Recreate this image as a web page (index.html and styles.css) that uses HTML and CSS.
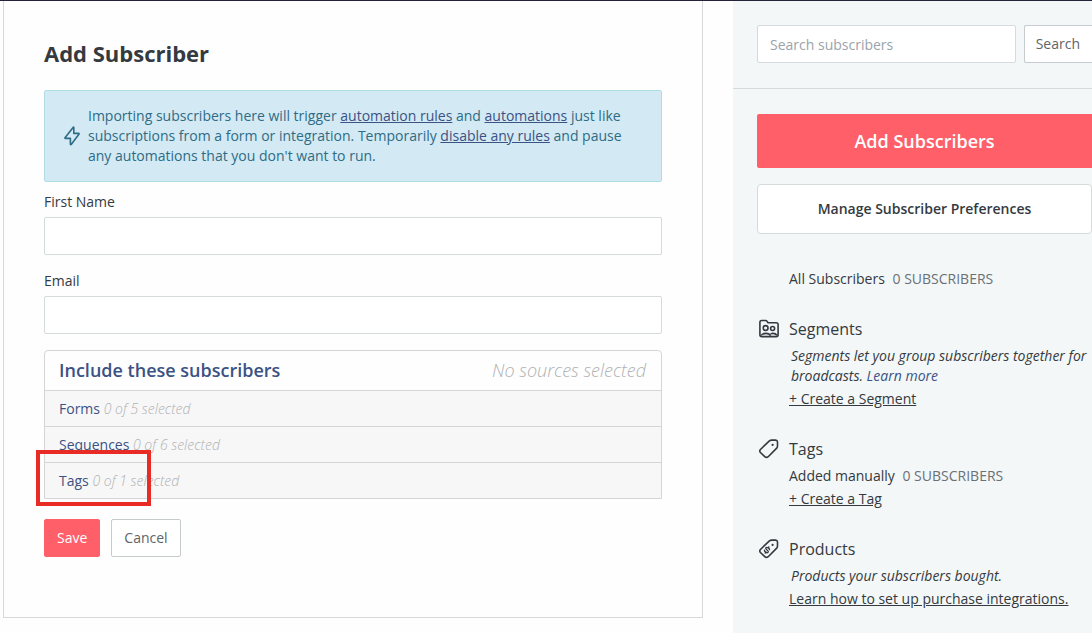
FILE: index.html
```
<!DOCTYPE html>
<html lang="en">
<head>
    <meta charset="UTF-8">
    <meta name="viewport" content="width=device-width, initial-scale=1.0">
    <title>Add Subscriber</title>
    <link rel="stylesheet" href="styles.css">
</head>
<body>

<div class="page">
    <main class="main">
        <form class="card">
            <h1>Add Subscriber</h1>

            <div class="notice">
                <svg class="notice-icon" width="16" height="20" viewBox="0 0 16 20" fill="none" stroke="currentColor" stroke-width="1.6" stroke-linejoin="round">
                    <path d="M9.3 1.2 Q9.8 .8 9.8 1.6 V7.4 H14.6 Q15.4 7.5 14.9 8.3 L7.2 18.4 Q6.5 19 6.4 18.2 V12.4 H1.5 Q.6 12.3 1.2 11.5 Z"/>
                </svg>
                <p>Importing subscribers here will trigger <a href="#">automation rules</a> and <a href="#">automations</a> just like subscriptions from a form or integration. Temporarily <a href="#">disable any rules</a> and pause any automations that you don't want to run.</p>
            </div>

            <div class="field">
                <label for="firstName">First Name</label>
                <input type="text" id="firstName" name="firstName">
            </div>
            <div class="field">
                <label for="email">Email</label>
                <input type="email" id="email" name="email">
            </div>

            <div class="sources">
                <div class="sources-header">
                    <h2>Include these subscribers</h2>
                    <span class="muted">No sources selected</span>
                </div>
                <div class="source-row"><a href="#">Forms</a> <span class="muted">0 of 5 selected</span></div>
                <div class="source-row"><a href="#">Sequences</a> <span class="muted">0 of 6 selected</span></div>
                <div class="source-row highlighted"><a href="#">Tags</a> <span class="muted">0 of 1 selected</span></div>
            </div>

            <div class="actions">
                <button type="submit" class="btn btn-save">Save</button>
                <button type="button" class="btn">Cancel</button>
            </div>
        </form>
    </main>

    <aside class="sidebar">
        <form class="search">
            <input type="text" placeholder="Search subscribers" aria-label="Search subscribers">
            <button type="submit" class="btn btn-search">Search</button>
        </form>

        <div class="sidebar-body">
            <button type="button" class="btn-add">Add Subscribers</button>
            <button type="button" class="btn-manage">Manage Subscriber Preferences</button>

            <p class="all">All Subscribers <span class="count">0 SUBSCRIBERS</span></p>

            <section class="group">
                <h3>
                    <svg width="20" height="20" viewBox="0 0 20 20" fill="none" stroke="currentColor" stroke-width="1.6" stroke-linejoin="round">
                        <path d="M.9 3.2 Q.9 1.5 2.6 1.5 H6.6 Q7.5 1.5 8.1 2.4 L9 3.8 H17.2 Q19.1 3.8 19.1 5.6 V15.8 Q19.1 17.6 17.2 17.6 H2.8 Q.9 17.6 .9 15.8 Z"/>
                        <circle cx="6.6" cy="9" r="2.4"/>
                        <circle cx="13.6" cy="9.5" r="2"/>
                        <path d="M2.2 16.6 Q3 14.4 6.8 14.4 T11.6 16.8 M11.6 14.8 Q15.8 13.4 18 16.3"/>
                    </svg>
                    Segments
                </h3>
                <p class="description">Segments let you group subscribers together for broadcasts. <a href="#">Learn more</a></p>
                <a href="#" class="group-link">+ Create a Segment</a>
            </section>

            <section class="group">
                <h3>
                    <svg width="20" height="20" viewBox="0 0 20 20" fill="none" stroke="currentColor" stroke-width="1.6" stroke-linejoin="round">
                        <path d="M10.4 1.9 Q11.4 1.1 12.6 1.1 H16.6 Q18.4 1.2 18.5 3 V7 Q18.5 8.2 17.7 9.1 L9.2 17.7 Q7.4 19.1 5.8 17.7 L1.4 13.5 Q.1 12 1.4 10.5 Z"/>
                        <circle cx="13.6" cy="5.9" r="1.1" fill="currentColor" stroke="none"/>
                    </svg>
                    Tags
                </h3>
                <p>Added manually <span class="count">0 SUBSCRIBERS</span></p>
                <a href="#" class="group-link">+ Create a Tag</a>
            </section>

            <section class="group">
                <h3>
                    <svg width="20" height="20" viewBox="0 0 20 20" fill="none" stroke="currentColor" stroke-width="1.6" stroke-linejoin="round">
                        <path d="M10.4 1.9 Q11.4 1.1 12.6 1.1 H16.6 Q18.4 1.2 18.5 3 V7 Q18.5 8.2 17.7 9.1 L9.2 17.7 Q7.4 19.1 5.8 17.7 L1.4 13.5 Q.1 12 1.4 10.5 Z"/>
                        <circle cx="13.6" cy="5.9" r="1.1" fill="currentColor" stroke="none"/>
                        <path transform="translate(8 11) rotate(30)" stroke-width="1.4" stroke-linecap="round" d="M2 -1.6 Q1.4 -2.5 0 -2.5 Q-2 -2.4 -2 -1.2 Q-2 -.1 0 0 Q2.1 .1 2.1 1.3 Q2 2.5 0 2.5 Q-1.6 2.5 -2.1 1.5 M0 -3.6 V-2.5 M0 2.5 V3.6"/>
                    </svg>
                    Products
                </h3>
                <p class="description">Products your subscribers bought.</p>
                <a href="#" class="group-link">Learn how to set up purchase integrations.</a>
            </section>
        </div>
    </aside>
</div>

</body>
</html>
```
FILE: styles.css
```
*, *::after {
    box-sizing: border-box;
}

body {
    margin: 0;
    font-family: "Open Sans", sans-serif;
    font-size: 14px;
    line-height: 20px;
    color: #343a40;
    background-color: #fefefe;
}

h1, h2, h3, p {
    margin: 0;
}

a {
    color: #3b5284;
}

input, button {
    font-family: inherit;
    font-size: 14px;
    line-height: 20px;
}

button {
    cursor: pointer;
}

input {
    width: 100%;
    height: 38px;
    padding: 8px 12px;
    border: 1px solid #d5dadd;
    border-radius: 2px;
    background-color: white;
    color: #343a40;
}

input::placeholder {
    color: #9aa3ab;
}

.page {
    display: flex;
    min-height: 100vh;
    border-top: 1px solid #26223a;
}

/* Main column */
.main {
    flex: 1;
    min-width: 0;
    padding: 0 30px 15px 3px;
}

.card {
    padding: 36px 40px 60px;
    border: 1px solid #d5d9dc;
    border-top: none;
}

h1 {
    margin-bottom: 21px;
    font-size: 22px;
    font-weight: 700;
    line-height: 32px;
}

.notice {
    display: flex;
    align-items: center;
    gap: 8px;
    margin-bottom: 10px;
    padding: 15px 19px;
    border: 1px solid #afdde4;
    border-radius: 2px;
    background-color: #d3e9f4;
    color: #2e6c85;
}

.notice-icon {
    flex: none;
}

.field {
    margin-bottom: 16px;
}

.field label {
    display: block;
    margin-bottom: 5px;
}

.field input {
    display: block;
}

.sources {
    border: 1px solid #d3d5d6;
    border-radius: 4px 4px 0 0;
}

.sources-header {
    display: flex;
    justify-content: space-between;
    padding: 7px 15px 8px 14px;
    font-size: 18px;
    line-height: 24px;
}

h2 {
    font-size: 18px;
    font-weight: 600;
    color: #3b5284;
}

.source-row {
    position: relative;
    padding: 8px 14px 7px;
    border-top: 1px solid #d3d5d6;
    background-color: #f7f7f7;
}

.source-row a {
    text-decoration: none;
}

.muted {
    font-weight: 300;
    font-style: italic;
    color: #b0b2b4;
}

/* Red callout box over the row */
.highlighted::after {
    content: "";
    position: absolute;
    top: -13px;
    left: -9px;
    width: 115px;
    height: 56px;
    border: 4px solid #e92b25;
}

.actions {
    display: flex;
    gap: 11px;
    margin-top: 20px;
}

.btn {
    height: 38px;
    padding: 0 12px;
    border: 1px solid #c6cbce;
    border-radius: 2px;
    background-color: white;
    color: #5f6468;
}

.btn-save {
    border-color: #ff5f69;
    background-color: #ff5f69;
    color: white;
}

/* Sidebar */
.sidebar {
    flex: 0 0 359px;
    background-color: #f3f7f8;
}

.search {
    display: flex;
    gap: 8px;
    padding: 24px 0 25px 24px;
    border-bottom: 1px solid #d5dadd;
}

.search input {
    flex: 1;
    min-width: 0;
}

.btn-search {
    flex: none;
    padding: 0 12px 0 11px;
    border-right: none;
    border-radius: 2px 0 0 2px;
}

.sidebar-body {
    padding: 25px 0 25px 24px;
}

.btn-add, .btn-manage {
    display: block;
    width: 100%;
    font-weight: 600;
}

.btn-add {
    height: 54px;
    margin-bottom: 16px;
    border: none;
    border-radius: 2px 0 0 2px;
    background-color: #ff5f69;
    color: white;
    font-size: 18px;
}

.btn-manage {
    height: 50px;
    border: 1px solid #d5dadd;
    border-radius: 4px;
    background-color: white;
    color: #343a40;
}

.all {
    margin: 35px 0 28px 32px;
}

.count {
    margin-left: 4px;
    color: #6b7075;
}

.group {
    margin-bottom: 28px;
    padding-left: 32px;
}

.group:last-child {
    margin-bottom: 0;
}

h3 {
    display: flex;
    align-items: center;
    gap: 10px;
    margin: 0 0 5px -30px;
    font-size: 16px;
    font-weight: 400;
    line-height: 24px;
}

.description {
    padding-left: 2px;
    font-style: italic;
}

.description a {
    text-decoration: none;
}

.group-link {
    display: block;
    width: fit-content;
    margin-top: 3px;
    color: #343a40;
}
```
